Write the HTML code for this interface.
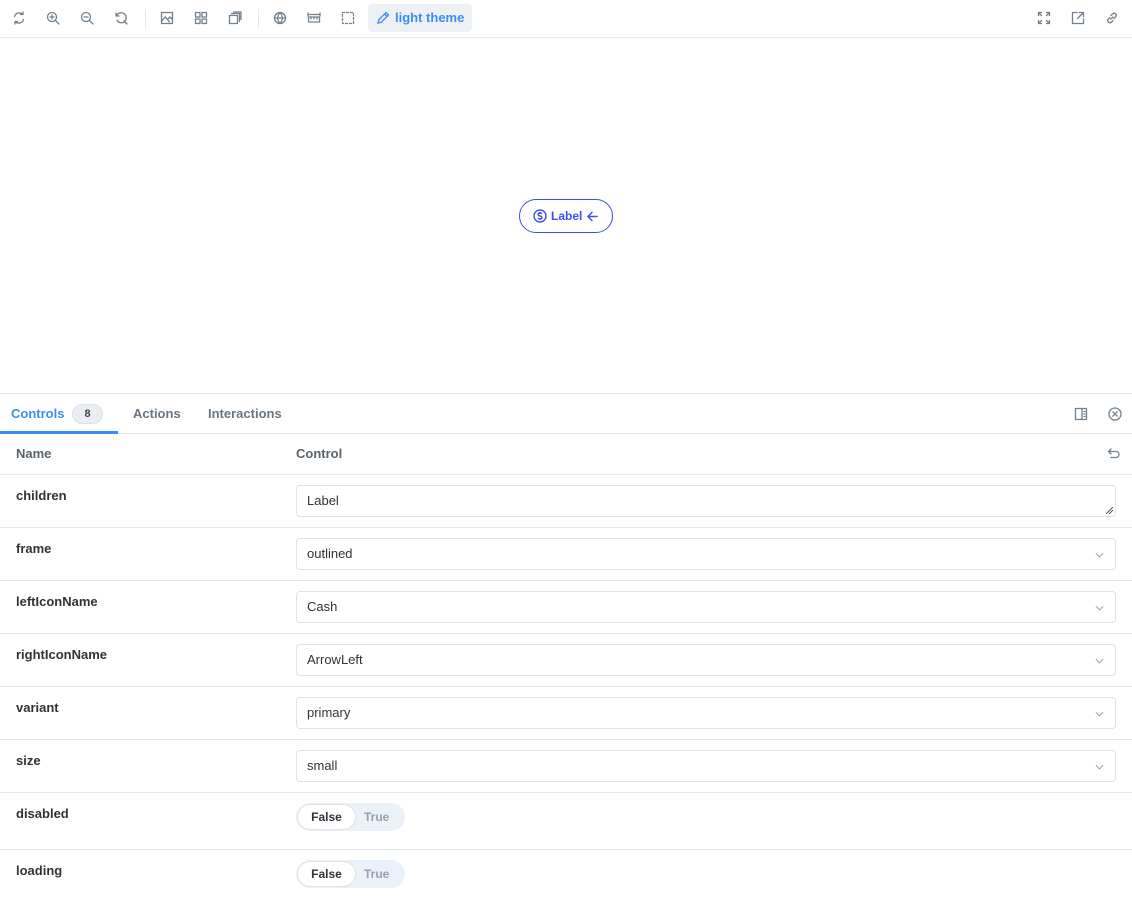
<!DOCTYPE html>
<html><head><style>
*{box-sizing:border-box;margin:0;padding:0}
body{width:1132px;height:911px;background:#fff;font-family:"Liberation Sans",sans-serif;color:#2e3438;overflow:hidden;position:relative}
.tb{position:absolute;left:0;top:0;width:1132px;height:38px;border-bottom:1px solid #e3e6ea;background:#fff}
.ic{position:absolute;top:11px;width:16px;height:16px}
.ic svg{width:14px;height:14px;stroke:#73808c;fill:none;stroke-width:1.3;stroke-linecap:round;stroke-linejoin:round}
.sep{position:absolute;top:9px;width:1px;height:20px;background:#e3e6ea}
.theme{position:absolute;left:368px;top:4px;width:104px;height:28px;background:#eef1f4;border-radius:4px;color:#3b8ef0;font-weight:bold;font-size:13px;line-height:28px;padding-left:27px}
.btn{position:absolute;left:519px;top:199px;width:94px;height:34px;border:1px solid #3d4ff0;border-radius:17px;color:#3d4ff0;font-size:12px;font-weight:bold;line-height:32px;padding-left:31px}
.panel{position:absolute;left:0;top:393px;width:1132px;border-top:1px solid #e3e6ea}
.tabs{height:40px;border-bottom:1px solid #e3e6ea;position:relative;font-size:13px;font-weight:bold}
.tab{position:absolute;top:12px;color:#6b7580}
.badge{position:absolute;left:72px;top:10px;width:31px;height:20px;border-radius:10px;background:#e9eef3;border:1px solid #dde3ea;font-size:11px;text-align:center;line-height:18px;color:#444}
.ul{position:absolute;left:0;bottom:-1px;width:118px;height:3px;background:#3b8ef0}
.row{position:relative;border-bottom:1px solid #e3e6ea;height:53px}
.nm{position:absolute;left:16px;top:13px;font-size:13px;font-weight:bold;color:#2e3438}
.inp{position:absolute;left:296px;top:10px;width:820px;height:32px;border:1px solid #dfe3e8;border-radius:4px;font-size:13px;line-height:30px;padding-left:10px;color:#333}
.chev{position:absolute;right:12px;top:11px;width:7px;height:7px;border-right:1px solid #8a949e;border-bottom:1px solid #8a949e;transform:rotate(45deg) scale(.8)}
.tg{position:absolute;left:296px;top:10px;width:109px;height:28px;border-radius:14px;background:#eaf1f8;font-size:12px;font-weight:bold}
.tg .f{position:absolute;left:1px;top:1px;width:59px;height:26px;border-radius:13px;background:#fff;border:1px solid #dfe3e8;text-align:center;line-height:24px;color:#2e3438}
.tg .t{position:absolute;left:68px;top:0;line-height:28px;color:#97a0a9}
</style></head><body>
<div class="tb">
<div class="ic" style="left:12px"><svg viewBox="0 0 14 14"><path d="M2.5 5.5A5 5 0 0 1 11 3.5M11.5 8.5A5 5 0 0 1 3 10.5M11 1v2.5H8.5M3 13v-2.5h2.5"/></svg></div>
<div class="ic" style="left:46px"><svg viewBox="0 0 14 14"><circle cx="6" cy="6" r="4.5"/><path d="M9.5 9.5L13 13M4 6h4M6 4v4"/></svg></div>
<div class="ic" style="left:80px"><svg viewBox="0 0 14 14"><circle cx="6" cy="6" r="4.5"/><path d="M9.5 9.5L13 13M4 6h4"/></svg></div>
<div class="ic" style="left:114px"><svg viewBox="0 0 14 14"><path d="M2 2v3h3M2.5 5A5 5 0 1 1 3 9.5M10 10l3 3"/></svg></div>
<div class="sep" style="left:145px"></div>
<div class="ic" style="left:160px"><svg viewBox="0 0 14 14"><rect x="1.5" y="1.5" width="11" height="11"/><path d="M1.5 10l4-4 4 5M8 8l2-2 2.5 2.5"/></svg></div>
<div class="ic" style="left:194px"><svg viewBox="0 0 14 14"><rect x="1.5" y="1.5" width="4.5" height="4.5"/><rect x="8" y="1.5" width="4.5" height="4.5"/><rect x="1.5" y="8" width="4.5" height="4.5"/><rect x="8" y="8" width="4.5" height="4.5"/></svg></div>
<div class="ic" style="left:228px"><svg viewBox="0 0 14 14"><rect x="1.5" y="4.5" width="8" height="8"/><path d="M3.5 2.5h8v8M5.5 1h7.5v7.5"/></svg></div>
<div class="sep" style="left:258px"></div>
<div class="ic" style="left:273px"><svg viewBox="0 0 14 14"><circle cx="7" cy="7" r="5.5"/><path d="M1.5 7h11M7 1.5c-3 3-3 8 0 11M7 1.5c3 3 3 8 0 11"/></svg></div>
<div class="ic" style="left:307px"><svg viewBox="0 0 14 14"><path d="M1 2v3M13 2v3M1 3.5h12"/><rect x="1.5" y="6" width="11" height="5"/><path d="M4 6v2M7 6v2M10 6v2"/></svg></div>
<div class="ic" style="left:341px"><svg viewBox="0 0 14 14" stroke-dasharray="2 2"><rect x="1.5" y="1.5" width="11" height="11"/></svg></div>
<div class="theme"><svg style="position:absolute;left:8px;top:7px;width:14px;height:14px;stroke:#3b8ef0;fill:none;stroke-width:1.3" viewBox="0 0 14 14"><path d="M2 12l1-3.5 7-7 2.5 2.5-7 7zM8.5 3l2.5 2.5"/></svg>light theme</div>
<div class="ic" style="left:1037px"><svg viewBox="0 0 14 14"><path d="M1.5 4.5v-3h3M9.5 1.5h3v3M12.5 9.5v3h-3M4.5 12.5h-3v-3M1.5 1.5l3 3M12.5 1.5l-3 3M12.5 12.5l-3-3M1.5 12.5l3-3"/></svg></div>
<div class="ic" style="left:1071px"><svg viewBox="0 0 14 14"><path d="M6 1.5H1.5v11h11V8M8.5 1.5h4v4M12.5 1.5L6.5 7.5"/></svg></div>
<div class="ic" style="left:1105px"><svg viewBox="0 0 14 14"><path d="M6 8l2-2M5 6.5L3 8.5a2.2 2.2 0 0 0 3 3L8 9.5M9 7.5l2-2a2.2 2.2 0 0 0-3-3L6 4.5"/></svg></div>
</div>

<div class="btn"><svg style="position:absolute;left:13px;top:9px;width:14px;height:14px;stroke:#3d4ff0;fill:none;stroke-width:1.4" viewBox="0 0 14 14"><circle cx="7" cy="7" r="6"/><path d="M9 4.8C8.5 4.2 7.8 4 7 4c-1.2 0-2 .6-2 1.5S6 6.7 7 7s2 .6 2 1.5S8.2 10 7 10c-.8 0-1.6-.3-2-.9M7 3v1M7 10v1"/></svg>Label<svg style="position:absolute;left:66px;top:10px;width:13px;height:13px;stroke:#3d4ff0;fill:none;stroke-width:1.5;stroke-linecap:round;stroke-linejoin:round" viewBox="0 0 14 14"><path d="M12 7H2M6.5 2.5L2 7l4.5 4.5"/></svg></div>

<div class="panel">
<div class="tabs">
<div class="tab" style="left:11px;color:#3b8ef0">Controls</div>
<div class="badge">8</div>
<div class="tab" style="left:133px">Actions</div>
<div class="tab" style="left:208px">Interactions</div>
<div class="ul"></div>
<div class="ic" style="left:1074px;top:13px"><svg viewBox="0 0 14 14"><rect x="1.5" y="1.5" width="11" height="11"/><path d="M8 1.5v11M10 4.5h1M10 7h1M10 9.5h1"/></svg></div>
<div class="ic" style="left:1108px;top:13px"><svg viewBox="0 0 14 14"><circle cx="7" cy="7" r="6"/><path d="M4.8 4.8l4.4 4.4M9.2 4.8l-4.4 4.4"/></svg></div>
</div>
<div class="row" style="height:41px"><div class="nm" style="top:12px;color:#5a636c">Name</div><div class="nm" style="left:296px;top:12px;color:#5a636c">Control</div>
<div class="ic" style="left:1107px;top:13px"><svg viewBox="0 0 14 14"><path d="M4 2L1.5 4.5 4 7M1.5 4.5H9a3 3 0 0 1 0 6H4"/></svg></div></div>
<div class="row"><div class="nm">children</div><div class="inp">Label<svg style="position:absolute;right:2px;bottom:2px;width:7px;height:7px;stroke:#555;stroke-width:1" viewBox="0 0 7 7"><path d="M0 7L7 0M3 7L7 3"/></svg></div></div>
<div class="row"><div class="nm">frame</div><div class="inp">outlined<div class="chev"></div></div></div>
<div class="row"><div class="nm">leftIconName</div><div class="inp">Cash<div class="chev"></div></div></div>
<div class="row"><div class="nm">rightIconName</div><div class="inp">ArrowLeft<div class="chev"></div></div></div>
<div class="row"><div class="nm">variant</div><div class="inp">primary<div class="chev"></div></div></div>
<div class="row"><div class="nm">size</div><div class="inp">small<div class="chev"></div></div></div>
<div class="row" style="height:57px"><div class="nm">disabled</div><div class="tg"><div class="f">False</div><div class="t">True</div></div></div>
<div class="row" style="height:57px;border:none"><div class="nm">loading</div><div class="tg"><div class="f">False</div><div class="t">True</div></div></div>
</div>
</body></html>
